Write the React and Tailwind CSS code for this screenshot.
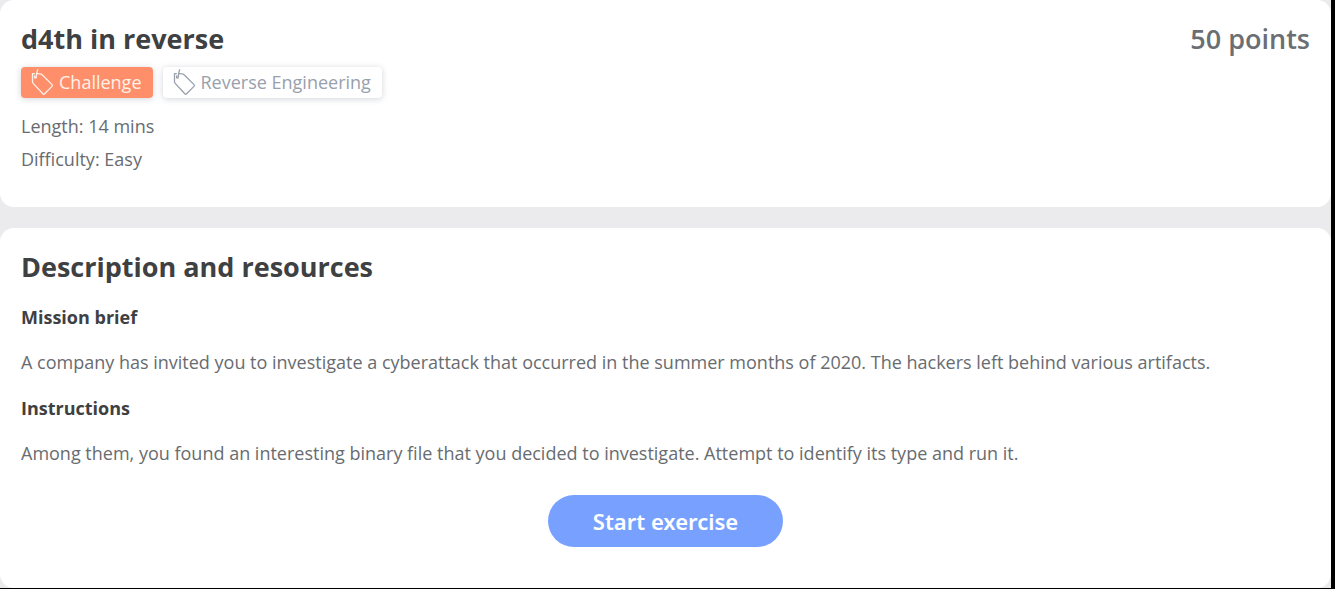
function TagIcon() {
  return (
    <svg
      className="h-[26px] w-[26px] shrink-0"
      viewBox="0 0 26 26"
      fill="none"
      stroke="currentColor"
      strokeWidth="1.3"
      strokeLinecap="round"
      strokeLinejoin="round"
      aria-hidden="true"
    >
      <path d="M5.4 4.6 H3.5 V12.4 Q3.5 13.6 4.4 14.6 L13.8 24.8 Q14.7 25.7 15.6 24.8 L23 17.4 Q23.8 16.5 23 15.6 L13.4 6 Q12.3 4.8 11 4.8 L8.2 4.6" />
      <path d="M8.7 0.8 C7.8 2.8 7.4 5.6 7.2 8.2 Q6.8 9.6 5.9 9 Q5.4 8.4 5.7 7" />
    </svg>
  );
}

function Tag({ className, children }) {
  return (
    <span
      className={`flex h-[31px] items-center gap-1 rounded pr-[11px] pb-px pl-2 text-lg shadow-[0_1px_6px_rgba(50,60,80,0.22)] ${className}`}
    >
      <TagIcon />
      {children}
    </span>
  );
}

function Brief({ title, children }) {
  return (
    <div className="flex flex-col gap-3">
      <h3 className="font-bold text-[#3e4042]">{title}</h3>
      <p>{children}</p>
    </div>
  );
}

export default function App() {
  return (
    <div className="bg-black pr-1 pb-px font-['Open_Sans',sans-serif] text-lg/[33px] text-[#686c70]">
      <main className="flex flex-col gap-[21px] bg-[#ebebed]">
        <section className="rounded-[14px] bg-white px-[21px] pt-[19px] pb-[31px]">
          <header className="flex items-center justify-between text-[27px]/[40px]">
            <h1 className="font-bold text-[#3e4042]">d4th in reverse</h1>
            <p className="font-semibold text-[#6b6e73]">50 points</p>
          </header>
          <div className="mt-2 mb-3 flex gap-[10px]">
            <Tag className="bg-[#ff8f6b] text-[#fff1e8]">Challenge</Tag>
            <Tag className="bg-white text-[#98a0ac]">Reverse Engineering</Tag>
          </div>
          <p>Length: 14 mins</p>
          <p>Difficulty: Easy</p>
        </section>

        <section className="rounded-[14px] bg-white px-[21px] pt-[19px] pb-[41px]">
          <h2 className="mb-[14px] text-[27px]/[40px] font-bold text-[#3e4042]">
            Description and resources
          </h2>
          <div className="flex flex-col gap-[13px]">
            <Brief title="Mission brief">
              A company has invited you to investigate a cyberattack that occurred in the summer
              months of 2020. The hackers left behind various artifacts.
            </Brief>
            <Brief title="Instructions">
              Among them, you found an interesting binary file that you decided to investigate.
              Attempt to identify its type and run it.
            </Brief>
          </div>
          <div className="mt-[25px] flex justify-center">
            <button
              type="button"
              className="h-[52px] cursor-pointer rounded-full bg-[#78a1ff] px-[45px] font-['Noto_Sans',sans-serif] text-[22px] font-semibold text-white"
            >
              Start exercise
            </button>
          </div>
        </section>
      </main>
    </div>
  );
}
